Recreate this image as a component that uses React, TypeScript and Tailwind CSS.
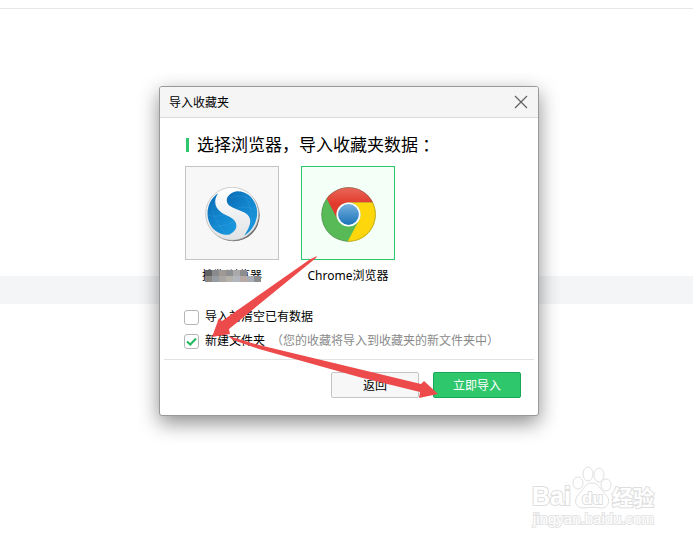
import React, { useState } from "react";

function SogouIcon() {
    return (
        <svg viewBox="0 0 168 168" className="h-[55px] w-[55px]" aria-hidden="true">
            <defs>
                <linearGradient id="sgBlue" x1="0" y1="0" x2="1" y2="1">
                    <stop offset="0" stopColor="#0a6bb5" />
                    <stop offset="0.5" stopColor="#1286cf" />
                    <stop offset="1" stopColor="#1c9be0" />
                </linearGradient>
                <linearGradient id="sgWhite" x1="0" y1="0" x2="0" y2="1">
                    <stop offset="0" stopColor="#ffffff" />
                    <stop offset="1" stopColor="#e0e2e4" />
                </linearGradient>
            </defs>
            <circle cx="87" cy="86" r="80" fill="#666" />
            <circle cx="83" cy="82" r="81" fill="url(#sgWhite)" stroke="#b5b5b5" strokeWidth="2" />
            <path d="M40 19C8 40 -2 86 18 118C32 140 56 148 75 145C92 136 98 126 95 112C91 96 70 90 50 78C28 62 26 40 40 19Z" fill="url(#sgBlue)" />
            <path d="M98 13C72 18 60 36 70 52C78 64 106 70 122 79C144 92 144 114 120 148C150 130 166 92 157 60C148 30 124 12 98 13Z" fill="url(#sgBlue)" />
            <g fill="none" stroke="#6ab8e8" strokeWidth="1" opacity="0.6">
                <path d="M10 85C26 92 42 90 58 83" />
                <path d="M24 122C46 122 72 116 92 104" />
                <path d="M22 68C30 98 44 124 66 145" />
                <path d="M74 34C96 24 120 26 142 38" />
                <path d="M96 66C116 58 136 60 157 72" />
                <path d="M112 14C132 36 142 60 142 120" />
            </g>
        </svg>
    );
}

function ChromeIcon() {
    return (
        <svg viewBox="0 0 164 164" className="h-[55px] w-[55px]" aria-hidden="true">
            <defs>
                <linearGradient id="chRed" x1="0" y1="0" x2="0" y2="1">
                    <stop offset="0" stopColor="#e8685a" />
                    <stop offset="0.5" stopColor="#e23a2c" />
                </linearGradient>
                <linearGradient id="chBlue" x1="0" y1="0" x2="0" y2="1">
                    <stop offset="0" stopColor="#74b0de" />
                    <stop offset="1" stopColor="#1c72b8" />
                </linearGradient>
            </defs>
            <circle cx="82" cy="82" r="81" fill="#58b957" />
            <path d="M17 34A81 81 0 0 1 155 46L82 46A36 36 0 0 0 51 100Z" fill="url(#chRed)" />
            <path d="M155 46A81 81 0 0 1 79 163L113 100A36 36 0 0 0 82 46Z" fill="#fdd70b" />
            <circle cx="82" cy="82" r="80" fill="none" stroke="#555" strokeOpacity="0.45" strokeWidth="2" />
            <circle cx="82" cy="82" r="36" fill="#fff" />
            <circle cx="82" cy="82" r="31" fill="url(#chBlue)" />
        </svg>
    );
}

// blurred-out part of the first browser's name
const MOSAIC = [
    ["#5f6163", "#888b8d", "#a09894", "#8d8f92", "#a9a9ab", "#8d8d8f"],
    ["#8b8782", "#979ca2", "#a9a5a2", "#b5b2ac", "#b1b7bd", "#b7a9a3", "#a9adb6", "#8c8c8e"],
];

function Mosaic() {
    return (
        <span className="absolute top-1 left-[3px] flex flex-col" aria-hidden="true">
            {MOSAIC.map((row, i) => (
                <span key={i} className="flex">
                    {row.map((color, j) => (
                        <span key={j} className="h-[6px] w-[7px]" style={{ backgroundColor: color }} />
                    ))}
                </span>
            ))}
        </span>
    );
}

function Arrows() {
    return (
        <svg viewBox="0 0 380 330" className="pointer-events-none absolute -top-px -left-px h-[330px] w-[380px]" aria-hidden="true">
            <path d="M158 170L157 172L70 243L71 248L53 251L60 232L63 235L150 174Z" fill="#ed4b4b" />
            <path d="M69 250L100 259L262 298L265 295L279 308L260 312L261 306L200 291L100 263L74 254Z" fill="#ed4b4b" />
        </svg>
    );
}

function Watermark() {
    return (
        <svg viewBox="0 0 130 66" className="absolute right-[35px] bottom-[10px] h-[66px] w-[130px]" role="img" aria-label="Baidu 经验">
            <g fill="#fff" stroke="#e0e0e0" strokeWidth="1">
                <ellipse cx="50" cy="17" rx="5" ry="6" />
                <ellipse cx="60" cy="8" rx="5" ry="7" />
                <ellipse cx="71" cy="9" rx="5" ry="7" />
                <ellipse cx="78" cy="19" rx="5" ry="6" />
                <path d="M64 17C71 17 72 23 77 28C84 34 80 43 72 42C67 41 61 41 56 42C47 42 45 34 51 28C56 23 57 17 64 17Z" />
            </g>
            <g fill="#fff" stroke="#dedede" strokeWidth="2" paintOrder="stroke" className="font-['Liberation_Sans','Noto_Sans_CJK_SC',sans-serif] font-bold">
                <text x="4" y="39" fontSize="25">Bai</text>
                <text x="54" y="38" fontSize="17">du</text>
                <text x="84" y="39" fontSize="21">经验</text>
            </g>
            <text x="5" y="58" fontSize="15" fill="#fff" stroke="#e4e4e4" strokeWidth="2" paintOrder="stroke" className="font-['Liberation_Sans',sans-serif]">
                jingyan.baidu.com
            </text>
        </svg>
    );
}

interface BrowserTileProps {
    label: string;
    selected: boolean;
    onSelect: () => void;
    icon: React.ReactNode;
    masked?: boolean;
}

function BrowserTile({ label, selected, onSelect, icon, masked }: BrowserTileProps) {
    return (
        <button type="button" aria-pressed={selected} onClick={onSelect} className="flex flex-col items-center">
            <span
                className={
                    selected
                        ? "flex h-[94px] w-[94px] items-center justify-center border border-[#2fc76c] bg-[#f3fff7] pt-0.5"
                        : "flex h-[94px] w-[94px] items-center justify-center border border-[#c4c4c4] bg-[#f7f7f7] pt-0.5"
                }
            >
                {icon}
            </span>
            <span className="relative mt-1.5 leading-5">
                {label}
                {masked && <Mosaic />}
            </span>
        </button>
    );
}

interface OptionProps {
    label: string;
    hint?: string;
    checked: boolean;
    onChange: (value: boolean) => void;
}

function Option({ label, hint, checked, onChange }: OptionProps) {
    return (
        <label className="flex h-6 items-center">
            <span className="mr-1.5 grid h-[15px] w-[15px]">
                <input
                    type="checkbox"
                    checked={checked}
                    onChange={(e) => onChange(e.target.checked)}
                    className="col-start-1 row-start-1 h-[15px] w-[15px] appearance-none rounded-[3px] border border-[#b5b5b5] bg-white"
                />
                {checked && (
                    <svg viewBox="0 0 15 15" className="pointer-events-none col-start-1 row-start-1 h-[15px] w-[15px]" aria-hidden="true">
                        <path d="M3 7.5L6.3 10.5L12 4.5" fill="none" stroke="#22b95f" strokeWidth="2" />
                    </svg>
                )}
            </span>
            {label}
            {hint && <span className="ml-1.5 text-[#8a8a8a]">{hint}</span>}
        </label>
    );
}

export default function App() {
    const [browser, setBrowser] = useState("chrome");
    const [clearOld, setClearOld] = useState(false);
    const [newFolder, setNewFolder] = useState(true);

    return (
        <div className="relative min-h-screen overflow-hidden bg-white font-['Noto_Sans','Noto_Sans_CJK_SC',sans-serif] text-xs text-black">
            {/* Page behind the dialog */}
            <div className="h-[9px] border-b border-[#e6e6e6]" />
            <div className="mt-[267px] h-7 bg-[#f3f5f7]" />
            <Watermark />

            <div className="absolute inset-0 flex items-start justify-center pt-[86px] pl-[5px]">
                <div
                    role="dialog"
                    aria-labelledby="dialog-title"
                    className="relative w-[380px] rounded-[3px] border border-[#97999b] bg-white shadow-[0_7px_20px_0_rgba(0,0,0,0.45)]"
                >
                    {/* Header */}
                    <div className="flex h-[31px] items-center justify-between rounded-t-[2px] border-b border-[#dadada] bg-[#f5f5f5] pr-[10px] pl-[9px]">
                        <h1 id="dialog-title" className="pt-0.5">导入收藏夹</h1>
                        <button type="button" aria-label="关闭">
                            <svg viewBox="0 0 14 14" className="h-[14px] w-[14px]" aria-hidden="true">
                                <path d="M1 1L13 13M13 1L1 13" stroke="#606060" strokeWidth="1.2" fill="none" />
                            </svg>
                        </button>
                    </div>

                    {/* Body */}
                    <div className="px-6 pt-[15px]">
                        <h2 className="flex h-6 items-center text-[17px] leading-6">
                            <span className="mr-2 ml-[2px] h-[14px] w-[3px] bg-[#2fc76c]" />
                            选择浏览器，导入收藏夹数据<span className="font-['Noto_Sans_CJK_JP',sans-serif]">：</span>
                        </h2>
                        <div className="mt-[9px] flex gap-[22px] pl-px">
                            <BrowserTile label="搜狗浏览器" masked selected={browser === "sogou"} onSelect={() => setBrowser("sogou")} icon={<SogouIcon />} />
                            <BrowserTile label="Chrome浏览器" selected={browser === "chrome"} onSelect={() => setBrowser("chrome")} icon={<ChromeIcon />} />
                        </div>
                        <div className="mt-[19px]">
                            <Option label="导入前清空已有数据" checked={clearOld} onChange={setClearOld} />
                            <Option label="新建文件夹" hint="（您的收藏将导入到收藏夹的新文件夹中）" checked={newFolder} onChange={setNewFolder} />
                        </div>
                    </div>

                    {/* Footer */}
                    <div className="mx-1 mt-[6px] flex justify-end gap-[14px] border-t border-[#e2e2e2] pt-3 pr-[13px] pb-[17px]">
                        <button type="button" className="h-[26px] w-[88px] rounded-[2px] border border-[#c4c4c4] bg-[#f7f7f7] pt-px">
                            返回
                        </button>
                        <button type="button" className="h-[26px] w-[88px] rounded-[2px] border border-[#17a857] bg-[#2fc76c] pt-px text-white">
                            立即导入
                        </button>
                    </div>

                    <Arrows />
                </div>
            </div>
        </div>
    );
}
